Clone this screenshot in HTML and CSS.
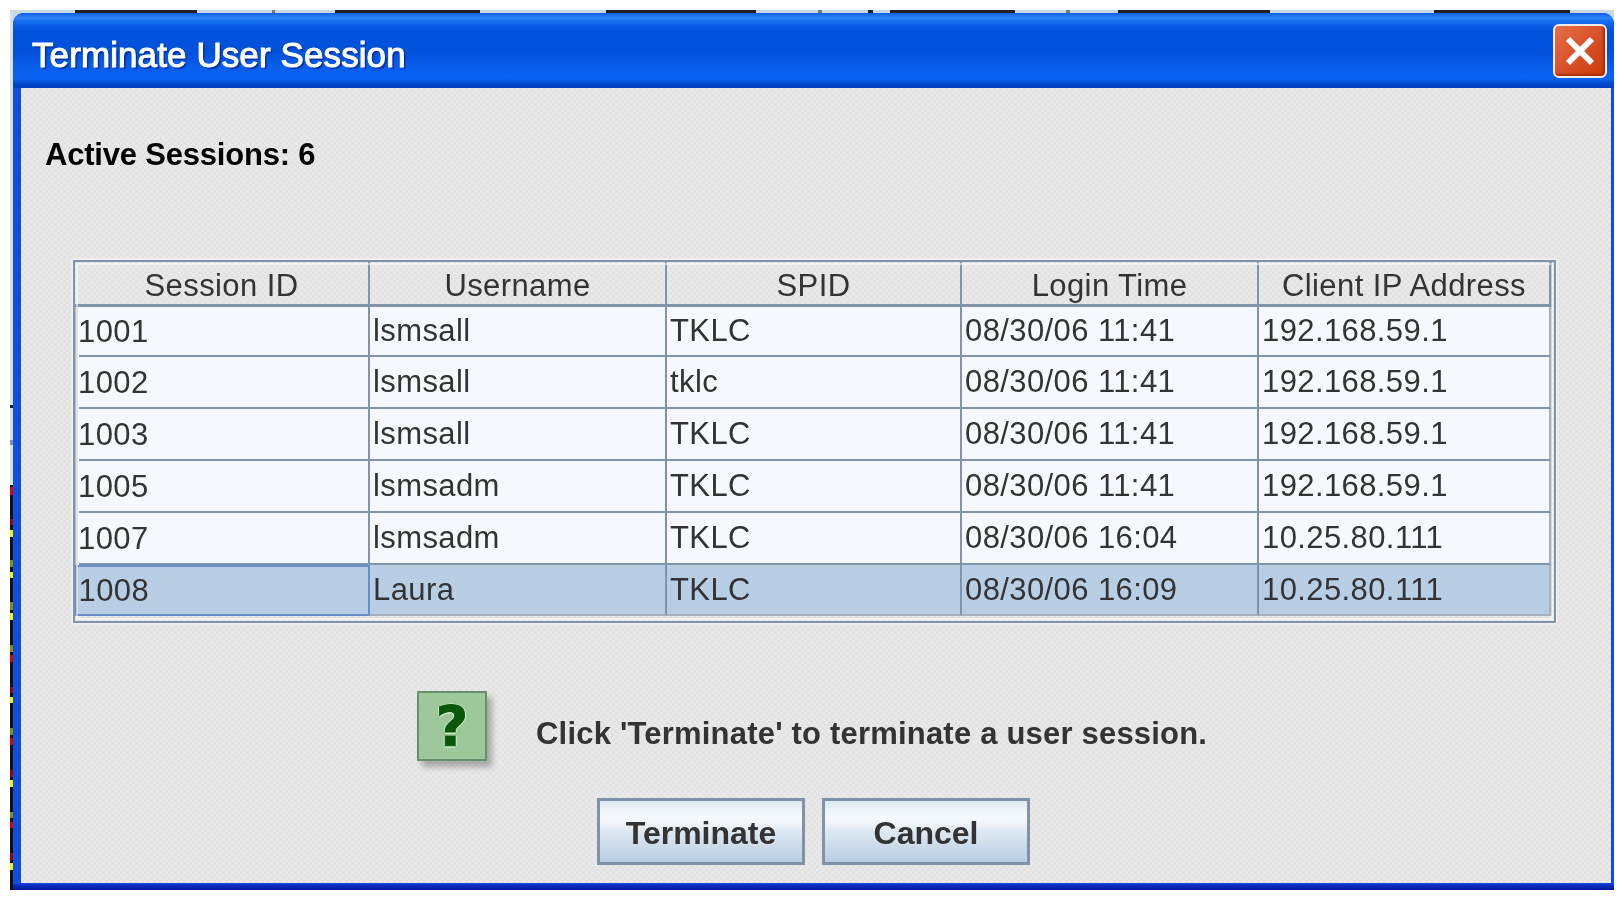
FILE: index.html
```html
<!DOCTYPE html>
<html lang="en">
<head>
<meta charset="utf-8">
<title>Terminate User Session</title>
<link rel="stylesheet" href="styles.css">
</head>
<body>
<div class="backdrop">
  <div class="top-strip"></div>
  <div class="backdrop-row">
    <div class="left-strip"></div>
    <main class="window">
      <header class="titlebar">
        <h1 class="title">Terminate User Session</h1>
        <button class="close" aria-label="Close">
          <svg width="36" height="36" viewBox="0 0 36 36"><path d="M6 6 L30 30 M30 6 L6 30" stroke="#fff" stroke-width="6" fill="none"/></svg>
        </button>
      </header>
      <section class="content">
        <p class="active">Active Sessions: 6</p>
        <div class="table-frame">
          <table class="sessions">
            <colgroup><col class="c1"><col class="c2"><col class="c3"><col class="c4"><col class="c5"></colgroup>
            <thead>
              <tr><th>Session ID</th><th>Username</th><th>SPID</th><th>Login Time</th><th>Client IP Address</th></tr>
            </thead>
            <tbody>
              <tr class="first"><td>1001</td><td>lsmsall</td><td>TKLC</td><td>08/30/06 11:41</td><td>192.168.59.1</td></tr>
              <tr><td>1002</td><td>lsmsall</td><td>tklc</td><td>08/30/06 11:41</td><td>192.168.59.1</td></tr>
              <tr><td>1003</td><td>lsmsall</td><td>TKLC</td><td>08/30/06 11:41</td><td>192.168.59.1</td></tr>
              <tr><td>1005</td><td>lsmsadm</td><td>TKLC</td><td>08/30/06 11:41</td><td>192.168.59.1</td></tr>
              <tr><td>1007</td><td>lsmsadm</td><td>TKLC</td><td>08/30/06 16:04</td><td>10.25.80.111</td></tr>
              <tr class="selected"><td class="focus">1008</td><td>Laura</td><td>TKLC</td><td>08/30/06 16:09</td><td>10.25.80.111</td></tr>
            </tbody>
          </table>
        </div>
        <div class="message">
          <div class="help-icon"><span class="help-mark">?</span></div>
          <p class="message-text">Click 'Terminate' to terminate a user session.</p>
        </div>
        <div class="buttons">
          <button class="btn">Terminate</button>
          <button class="btn">Cancel</button>
        </div>
      </section>
      <div class="bottom-edge"></div>
    </main>
  </div>
</div>
</body>
</html>
```

FILE: styles.css
```css
* { box-sizing: border-box; }
html, body { margin: 0; padding: 0; background: #fff; }
body { width: 1624px; height: 897px; overflow: hidden; padding: 10px 10px 0; font-family: "Liberation Sans", Arial, sans-serif; color: #333; }

.backdrop { width: 1604px; height: 880px; display: flex; flex-direction: column; background: #c9d8e6; }
.top-strip {
  height: 3px; flex: none;
  background: linear-gradient(90deg,
    #c9d8e6 65px, #222 65px 187px, #c9d8e6 187px 262px, #777 262px 265px, #c9d8e6 265px 325px,
    #222 325px 470px, #c9d8e6 470px 596px, #222 596px 746px, #c9d8e6 746px 808px, #777 808px 812px,
    #c9d8e6 812px 858px, #222 858px 863px, #c9d8e6 863px 880px, #222 880px 1005px, #c9d8e6 1005px 1056px,
    #777 1056px 1060px, #c9d8e6 1060px 1108px, #222 1108px 1260px, #c9d8e6 1260px 1424px,
    #222 1424px 1560px, #c9d8e6 1560px);
}
.backdrop-row { flex: 1; display: flex; min-height: 0; }
.left-strip {
  width: 3px; flex: none;
  background: linear-gradient(180deg,
    #d8e2ee 0 392px, #222 392px 395px, #d8e2ee 395px 427px, #8090a0 427px 432px, #d8e2ee 432px 472px,
    #111 472px 474px, #e00000 474px 482px, #111 482px 506px, #a00000 506px 512px, #111 512px 517px,
    #f5f000 517px 524px, #111 524px 547px, #8a8a00 547px 554px, #111 554px 559px, #f5f000 559px 565px,
    #111 565px 589px, #8a8a00 589px 597px, #111 597px 600px, #f5f000 600px 607px, #111 607px 632px,
    #8a8a00 632px 639px, #111 639px 642px, #e00000 642px 649px, #111 649px 674px, #a00000 674px 680px,
    #111 680px 684px, #f5f000 684px 690px, #111 690px 715px, #8a8a00 715px 722px, #111 722px 725px,
    #e00000 725px 732px, #111 732px 757px, #a00000 757px 764px, #111 764px 767px, #f5f000 767px 774px,
    #111 774px 799px, #8a8a00 799px 805px, #111 805px 809px, #e00000 809px 815px, #111 815px 840px,
    #a00000 840px 847px, #111 847px 850px, #f5f000 850px 857px, #111 857px);
}

.window {
  width: 1601px; display: flex; flex-direction: column;
  background: #0f4fe0; border-radius: 11px 11px 0 0; overflow: hidden;
  filter: blur(0.4px);
}

.titlebar {
  height: 75px; flex: none; display: flex; align-items: center; justify-content: space-between;
  padding: 0 7px 0 19px;
  background: linear-gradient(180deg, #0f5fe6 0, #2d83f8 5px, #1269ee 9px, #0052dc 18px, #0050da 38px, #0a5eee 55px, #0b62f2 66px, #004ad2 70px, #003fbc 75px);
}
.title {
  margin: 8px 0 0; font-size: 35px; font-weight: 400; color: #fff; line-height: 1; letter-spacing: 0.1px;
  -webkit-text-stroke: 1px #fff;
  text-shadow: 2px 2px 1px #0a2f9c;
}
.close {
  width: 54px; height: 54px; padding: 0; display: flex; align-items: center; justify-content: center;
  border: 2px solid #f3ece6; border-radius: 6px;
  background: linear-gradient(135deg, #e4704a 0, #d9512a 50%, #cb3a08 100%);
  box-shadow: inset -2px -2px 2px #a83005;
}

.content {
  flex: 1; min-height: 0; margin: 0 3px 0 8px; padding: 44px 55px 0 24px;
  background-color: #e6e6e6;
  background-image: conic-gradient(#e9e9e9 25%, #e2e2e2 0 50%, #e9e9e9 0 75%, #e2e2e2 0);
  background-size: 6px 6px;
  display: flex; flex-direction: column;
}
.active { margin: 0; font-size: 31px; line-height: 46px; font-weight: 700; color: #000; letter-spacing: -0.2px; }

.table-frame {
  margin: 82px 0 0 28px; width: 1483px; height: 363px;
  border: 2.5px solid #8095aa; outline: 2px solid rgba(255,255,255,.55); outline-offset: -5px;
  box-shadow: 0 0 0 1.5px #f1f1f1;
  padding-right: 3px;
}
.sessions { border-collapse: separate; border-spacing: 0; table-layout: fixed; width: 1477px; font-size: 31px; letter-spacing: 0.4px; color: #333; }
.c1 { width: 295px; }
.c2 { width: 297px; }
.c3 { width: 295px; }
.c4 { width: 297px; }
.c5 { width: 293px; }
.sessions th {
  height: 43.5px; padding: 6px 0 0; font-weight: 400; text-align: center;
  border-right: 2.5px solid #8095aa; border-bottom: 3px solid #8095aa;
}
.sessions th:last-child { border-right-width: 3px; }
.sessions td {
  height: 52px; padding: 0 0 0 3px; background: #f5f8fc; white-space: nowrap;
  border-right: 2px solid #8095aa; border-bottom: 2px solid #8095aa;
}
.sessions .first td { height: 50px; }
.sessions td:last-child { border-right: 3px solid #a6b1bc; }
.sessions td:first-child {
  border-bottom: 0;
  background: linear-gradient(#8095aa, #8095aa) no-repeat 4px 100% / 100% 2px, #f5f8fc;
  box-shadow: inset 3px 0 0 #b8c1ca;
}
.sessions .selected td { background: #b8cee5; height: 51px; border-bottom: 2px solid #a6b1bc; padding-top: 1px; }
.sessions .selected td.focus { border: 2.5px solid #6b8cc6; padding: 0 0 0 1.5px; box-shadow: none; }

.message { margin: 68px 0 0 372px; display: flex; align-items: center; gap: 49px; }
.help-icon {
  width: 70px; height: 70px; flex: none; display: flex; align-items: center; justify-content: center;
  background: #9cc89a; border: 2.5px solid #6b8f6c; box-shadow: 5px 6px 6px rgba(90,90,90,.45);
}
.help-mark {
  font-family: "DejaVu Sans", sans-serif; font-size: 56px; line-height: 1; font-weight: 700; color: #0a560a;
  -webkit-text-stroke: 1px #0a560a;
  text-shadow: 1.5px 0 #c8f0c4, -1.5px 0 #c8f0c4, 0 1.5px #c8f0c4, 0 -1.5px #c8f0c4;
}
.message-text { margin: 16px 0 0; font-size: 31px; font-weight: 700; color: #333; letter-spacing: 0.2px; white-space: nowrap; }

.buttons { margin: 37px 0 0 552px; display: flex; gap: 17px; }
.btn {
  width: 208px; height: 67px; padding: 3px 0 0; cursor: default;
  font-family: inherit; font-size: 32px; font-weight: 700; color: #333;
  border: 3px solid #7f93a8;
  background: linear-gradient(180deg, #dfeaf4 0, #f6f9fc 26%, #f1f5f9 36%, #dde8f2 50%, #c9d9ea 78%, #b8cde3 100%);
}
.bottom-edge { height: 7px; flex: none; background: linear-gradient(180deg, #1a50e8 0, #0a30c0 2px, #00189c 100%); }
```
